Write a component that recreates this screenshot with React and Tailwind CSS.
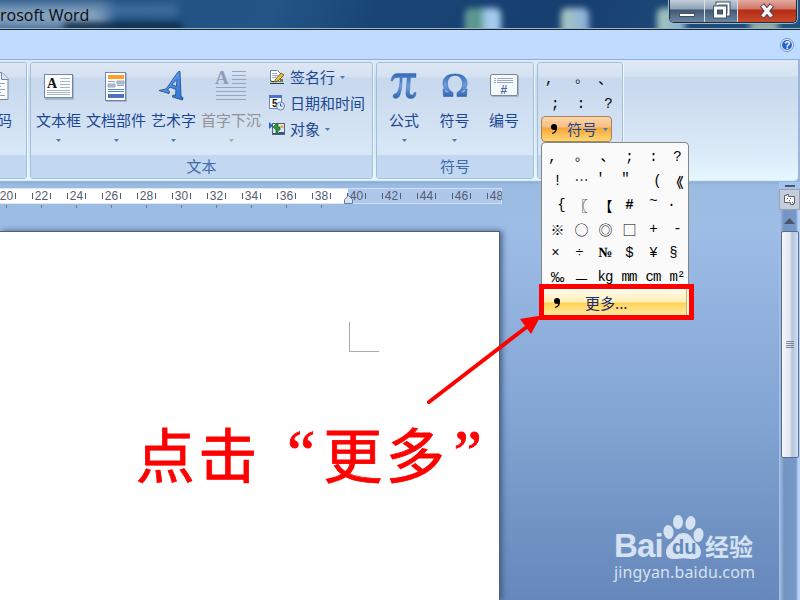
import React from "react";

const rulerNumbers = [20, 22, 24, 26, 28, 30, 32, 34, 36, 38, 40, 42, 44, 46, 48];

// [glyph, extra classes inside its 24px cell]
const symbols = [
  [",", "-translate-x-[5px]"],
  ["◦", "-translate-x-1 translate-y-1 text-[17px]"],
  ["、", "translate-x-0.5"],
  [";", ""],
  [":", ""],
  ["?", ""],
  ["!", ""],
  ["⋯", ""],
  ["′", "-translate-x-[5px] -translate-y-0.5"],
  ["″", "-translate-x-1 -translate-y-0.5"],
  ["(", "translate-x-1"],
  ["《", "-translate-x-px font-['Noto_Sans_CJK_SC'] font-bold"],
  ["{", "translate-x-1"],
  ["〖", "-translate-x-px font-['Noto_Sans_CJK_SC'] font-bold"],
  ["【", "font-['Noto_Sans_CJK_SC']"],
  ["#", "font-bold"],
  ["~", "-translate-y-1"],
  ["·", "-translate-x-1.5"],
  ["※", "font-['Noto_Sans_CJK_SC']"],
  ["○", "font-['Noto_Sans_CJK_SC']"],
  ["◎", "font-['Noto_Sans_CJK_SC']"],
  ["□", "font-['Noto_Sans_CJK_SC']"],
  ["+", ""],
  ["-", ""],
  ["×", "-translate-x-0.5"],
  ["÷", "-translate-x-0.5"],
  ["№", "font-['Liberation_Serif'] font-bold"],
  ["$", ""],
  ["¥", ""],
  ["§", "-translate-x-1"],
  ["‰", "font-['Liberation_Sans']"],
  ["—", "font-['Noto_Sans_CJK_SC']"],
  ["kg", ""],
  ["mm", ""],
  ["cm", ""],
  ["m²", ""],
];

function Caret({ className = "text-[#4a7ab8]" }) {
  return (
    <svg className={className} width="5" height="3" viewBox="0 0 5 3" fill="currentColor">
      <path d="M0 0h5L2.500 3z" />
    </svg>
  );
}

function TextBoxIcon() {
  return (
    <svg width="32" height="32" viewBox="0 0 32 32">
      <rect x="2" y="5" width="29" height="25" rx="1" fill="#7b8fa8" opacity=".5" />
      <rect x="1.500" y="4.500" width="28" height="23" fill="#fbfcfe" stroke="#7087a5" />
      <text x="4" y="18" fontSize="14" fontWeight="bold" fontFamily="Liberation Serif, serif" fill="#111">A</text>
      <path d="M17 8.500h10M17 11.500h10M17 14.500h10M17 17.500h10M4 20.500h23M4 22.500h23M4 24.500h23" stroke="#a5b5cc" />
    </svg>
  );
}

function PartsIcon() {
  return (
    <svg width="32" height="32" viewBox="0 0 32 32">
      <rect x="6" y="3" width="21" height="29" fill="#7b8fa8" opacity=".5" />
      <rect x="5.500" y="2.500" width="20" height="28" fill="#fdfdff" stroke="#6f87a8" />
      <rect x="8" y="5" width="16" height="4" fill="#ff9e22" />
      <path d="M8 11.500h7M17 11h7v3h-7zM8 14h7v3H8zM17 15.500h7" fill="#b0bfd5" stroke="#9aaac4" />
      <path d="M8 19.500h16M8 21.500h16" stroke="#5a7fae" />
      <rect x="8" y="24" width="16" height="4" fill="#4c74c3" />
    </svg>
  );
}

function WordArtIcon() {
  return (
    <svg className="overflow-visible" width="32" height="32" viewBox="0 0 32 32">
      <defs>
        <linearGradient id="art" x1="0" y1="0" x2="1" y2="1">
          <stop offset="0" stopColor="#a5ccfa" />
          <stop offset=".5" stopColor="#4b8fe8" />
          <stop offset="1" stopColor="#2f6ccb" />
        </linearGradient>
      </defs>
      <path d="M1 20.500L8 19C12 14 16 7 20.500 1.500h1.500L23 26.500l2 1-.5 2.500-10-3 .5-2 2.500.5.500-6-6-2.500-2.500 3 2 1.500-.5 2-10-3zM14 14.500l4.500 2L19 9.500z" fill="url(#art)" fillRule="evenodd" stroke="#274f8b" strokeWidth=".9" strokeLinejoin="round" />
    </svg>
  );
}

function DropCapIcon() {
  return (
    <svg className="overflow-visible" width="32" height="32" viewBox="0 0 32 32">
      <text x="0" y="14" fontSize="19" fontWeight="bold" fontFamily="Liberation Serif, serif" fill="#8e9dbb">A</text>
      <path d="M17 1.500h14M17 5.500h14M17 9.500h14M17 13.500h14M1 17.500h30M1 21.500h30M1 25.500h30M1 29.500h30" stroke="#97a5be" />
    </svg>
  );
}

function PiIcon() {
  return (
    <svg width="32" height="32" viewBox="0 0 32 32">
      <defs>
        <linearGradient id="blue" x1="0" y1="0" x2="0" y2="1">
          <stop offset="0" stopColor="#3468b4" />
          <stop offset=".5" stopColor="#6ba0e2" />
          <stop offset="1" stopColor="#3465b0" />
        </linearGradient>
      </defs>
      <path d="M3 11C4 5 6 3.500 10 3.500h18v4h-5.500L21.500 22c0 4 4 4 4.500.5h2c0 4-2 6-5 6-4 0-5.500-2.500-5-7l1.200-14h-5C14 16 13.500 22 11.500 26 10 29 5 29.500 5 26c0-1.500 1.500-2.500 3-2.500C11 21 12 15 12 7.500h-2C7 7.500 5.500 8.500 4.500 11z" fill="url(#blue)" stroke="#2f62ad" strokeWidth=".4" />
    </svg>
  );
}

function OmegaIcon() {
  return (
    <svg width="32" height="32" viewBox="0 0 32 32">
      <path d="M4 19h1.500c.5 3 1.500 3.500 5.500 3.500C6 20 4 17 4 13.500 4 7 9 4 16 4s12 3 12 9.500c0 3.500-2 6.500-7 9 4 0 5-.5 5.500-3.500H28l-.5 7.500H18v-4c4-2 5.500-5 5.500-9C23.500 8.500 20.500 5.500 16 5.500S8.500 8.500 8.500 13.500c0 4 1.500 7 5.500 9v4H4.500z" fill="url(#blue)" stroke="#3467b2" strokeWidth=".6" />
    </svg>
  );
}

function NumberIcon() {
  return (
    <svg width="32" height="32" viewBox="0 0 32 32">
      <rect x="3" y="5" width="28" height="22" rx="2" fill="#7b8fa8" opacity=".5" />
      <rect x="2.500" y="4.500" width="27" height="21" rx="1.500" fill="#f6f8fc" stroke="#7488a5" />
      <path d="M6 8.500h2M6 10.500h2M6 12.500h2M9 8.500h16M9 10.500h16M9 12.500h16" stroke="#9aabc5" />
      <text x="12.500" y="23.500" fontSize="12" fontWeight="bold" fontFamily="Liberation Sans, sans-serif" fill="#4c6b9f">#</text>
    </svg>
  );
}

function SignIcon() {
  return (
    <svg width="16" height="16" viewBox="0 0 16 16">
      <path d="M1.500 1.500h7l3 3v8h-10z" fill="#fff" stroke="#6e829e" />
      <path d="M3 4.500h5M3 6.500h6M3 8.500h4" stroke="#9db0c8" />
      <path d="M6 11l6-7 3 2-6 6-3 1z" fill="#f1bd36" stroke="#5b481d" strokeWidth=".8" />
      <path d="M1 14.500h14M2 12l3 1" stroke="#333" />
      <path d="M11 10h3v3h-3z" fill="#48904a" />
    </svg>
  );
}

function DateIcon() {
  return (
    <svg width="16" height="16" viewBox="0 0 16 16">
      <rect x=".5" y=".5" width="12" height="13" fill="#fff" stroke="#6b88b8" />
      <path d="M0 0h13v3H0z" fill="#4b75c4" />
      <text x="3" y="12" fontSize="10" fontWeight="bold" fontFamily="Liberation Sans, sans-serif" fill="#111">5</text>
      <circle cx="11.500" cy="11" r="4" fill="#dbe8f8" stroke="#5d7fb0" />
      <path d="M11.500 8.500V11h2" stroke="#345a94" fill="none" />
    </svg>
  );
}

function ObjectIcon() {
  return (
    <svg width="16" height="16" viewBox="0 0 16 16">
      <rect x="3.500" y="2.500" width="12" height="11" fill="#dbe9f5" stroke="#51657f" />
      <path d="M0 1l4 3.500L0 8z" fill="#2e62c0" />
      <path d="M7 3h2v3h2v3H9v4H7V9L4 6z" fill="#2f973e" stroke="#1a5c28" strokeWidth=".7" />
      <circle cx="13" cy="5.500" r="1.600" fill="#e8ad28" />
      <path d="M10 11.500h5M4 12.500h11" stroke="#38536f" />
    </svg>
  );
}

function BigButton({ icon, label, width, caret = true, disabled }) {
  return (
    <div className={"flex shrink-0 flex-col items-center pt-[7px] " + width}>
      {icon}
      <span className={"mt-1.5 h-6 text-[15px] leading-6 whitespace-nowrap " + (disabled ? "text-[#929292]" : "text-[#1b4792]")}>
        {label}
      </span>
      {caret && (
        <div className="mt-[7px]">
          <Caret className={disabled ? "text-[#aaa9ad]" : "text-[#4a7ab8]"} />
        </div>
      )}
    </div>
  );
}

function Group({ title, className, children }) {
  return (
    <div className={"flex h-[117px] shrink-0 flex-col overflow-hidden rounded-[3px] border border-[#9fbfdb] shadow-[1px_1px_0_#eef7ff] " + className}>
      <div className="flex h-[92px] shrink-0 bg-[linear-gradient(#dce6f4_0,#d5e1f1_14px,#c8d8ed_15px,#d9e8f6_100%)]">
        {children}
      </div>
      <div className="flex-1 bg-[#c1d8f0] text-center text-[15px] leading-[22px] text-[#3e6aaa]">{title}</div>
    </div>
  );
}

function TitleBar() {
  return (
    <div className="relative flex h-[30px] shrink-0 justify-between overflow-hidden border-b border-[#142739] bg-[linear-gradient(115deg,#1d4d80_0,#245587_34%,#184575_47%,#173f70_70%,#23517f_100%)]">
      <div className="absolute top-1 -left-5 h-6 w-32 bg-[#b7cbdc] opacity-70 blur-[7px]" />
      <div className="absolute top-1 left-[98px] h-3 w-20 bg-[#5e88b4] opacity-50 blur-[4px]" />
      <div className="absolute top-[23px] left-16 h-2 w-[118px] bg-[#112b45] blur-[3px]" />
      <div className="absolute top-2 left-[465px] h-7 w-9 rounded-md bg-[linear-gradient(90deg,#6fa39e,#4f9083_35%,#a5cbee_60%)] blur-[3px]" />
      <div className="absolute top-2 left-[561px] h-7 w-7 rounded-md bg-[linear-gradient(90deg,#adc8bf,#86b0dc)] blur-[3px]" />
      <div className="absolute top-2 left-[657px] h-7 w-7 rounded-md bg-[linear-gradient(90deg,#a4c5b8,#86b0dc)] blur-[3px]" />
      <div className="absolute top-5 left-[750px] h-5 w-7 bg-[#c9d6ba] opacity-70 blur-[3px]" />
      <div className="absolute bottom-0 h-px w-full bg-[#9db6bd]" />
      <span className="relative pt-1 font-['Open_Sans','Noto_Sans',sans-serif] text-[16px] leading-[23px] text-[#080c10]">
        rosoft Word
      </span>
      <div className="relative mr-[3px] flex h-[23px] w-[128px] overflow-hidden rounded-b-[5px] border border-t-0 border-[#1a2c40] shadow-[0_0_0_1px_#9fb5c9]">
        <div className="flex w-[35px] justify-center border-r border-[#d5dfe8] bg-[linear-gradient(#c1cedb_0,#8fa1b5_9px,#405872_10px,#6c86a3)]">
          <div className="mt-[13px] h-1 w-4 border border-[#425265] bg-white" />
        </div>
        <div className="flex w-[33px] justify-center border-r border-[#d5dfe8] bg-[linear-gradient(#c1cedb_0,#8fa1b5_9px,#405872_10px,#6c86a3)]">
          <svg className="mt-px" width="20" height="19" viewBox="0 0 20 19" fill="none">
            <path d="M6.500 4V2.500h11v11H15" stroke="#425265" strokeWidth="4" />
            <path d="M6.500 4V2.500h11v11H15" stroke="#fff" strokeWidth="2" />
            <path d="M4.500 7h9v8h-9z" stroke="#425265" strokeWidth="5" />
            <path d="M4.500 7h9v8h-9z" stroke="#fff" strokeWidth="3" />
          </svg>
        </div>
        <div className="flex flex-1 justify-center bg-[linear-gradient(#e3aaa0_0,#cf7666_9px,#b42b14_10px,#c94a2b)]">
          <svg className="mt-[3px]" width="18" height="16" viewBox="0 0 18 16">
            <path d="M4 2l10 12M14 2L4 14" stroke="#5b3d47" strokeWidth="5.500" />
            <path d="M4.500 2.500l9 11M13.500 2.500l-9 11" stroke="#f4f6f8" strokeWidth="3.500" />
          </svg>
        </div>
      </div>
    </div>
  );
}

function Ribbon() {
  return (
    <div className="relative h-[122px] shrink-0 bg-[#9bb6d9] pr-0.5">
      <div className="flex h-[120px] overflow-hidden rounded-br bg-[linear-gradient(#e0e9f5_0,#d5e2f1_16px,#c8d8ed_17px,#d9e9f7_90px,#e6f7ff_100%)] pt-0.5 shadow-[0_1px_0_#c5f0fa]">
        <Group title="" className="-ml-1 w-[31px]">
          <div className="flex flex-col pt-2">
            <svg className="-ml-4" width="30" height="32" viewBox="0 0 30 32">
              <path d="M3 1.500h18l6 6v21H3z" fill="#fbfcff" stroke="#6f87a8" />
              <path d="M20.500 1.500v7h7" fill="#dce5f1" stroke="#6f87a8" />
              <path d="M10 12.500h14M10 15.500h10M10 18.500h14M10 21.500h10M10 24.500h14" stroke="#91a5c1" />
            </svg>
            <span className="mt-[5px] text-[15px] leading-6 text-[#1b4792]">码</span>
          </div>
        </Group>

        <Group title="文本" className="ml-[3px] w-[343px]">
          <BigButton icon={<TextBoxIcon />} label="文本框" width="w-[55px]" />
          <BigButton icon={<PartsIcon />} label="文档部件" width="w-[60px]" />
          <BigButton icon={<WordArtIcon />} label="艺术字" width="w-[55px]" />
          <BigButton icon={<DropCapIcon />} label="首字下沉" width="w-[60px]" disabled />
          <div className="flex flex-col pt-px pl-2 text-[15px] text-[#1b4792]">
            <div className="flex h-[26px] items-center gap-[5px]">
              <SignIcon /> 签名行 <span><Caret /></span>
            </div>
            <div className="flex h-[26px] items-center gap-[5px] whitespace-nowrap">
              <DateIcon /> 日期和时间
            </div>
            <div className="flex h-[26px] items-center gap-[5px]">
              <ObjectIcon /> 对象 <span><Caret /></span>
            </div>
          </div>
        </Group>

        <Group title="符号" className="ml-[3px] w-[158px]">
          <BigButton icon={<PiIcon />} label="公式" width="w-[54px]" />
          <BigButton icon={<OmegaIcon />} label="符号" width="w-[47px]" />
          <BigButton icon={<NumberIcon />} label="编号" width="w-[52px]" caret={false} />
        </Group>

        <Group title="" className="ml-[3px] w-[86px]">
          <div className="flex w-[74px] flex-col pt-[7px] pl-[3px]">
            <div className="grid h-[46px] grid-cols-3 font-['Liberation_Mono','Noto_Sans_CJK_SC',monospace] text-[14px] leading-[22px] text-black">
              <span className="-translate-y-0.5 pl-1">,</span>
              <span className="translate-y-0.5 pl-2 text-[17px]">◦</span>
              <span className="-translate-y-px pl-2.5">、</span>
              <span className="pl-2.5">;</span>
              <span className="pl-3">:</span>
              <span className="pl-4">?</span>
            </div>
            <div className="flex h-[26px] w-[71px] shrink-0 items-center rounded-sm border border-[#a88550] bg-[linear-gradient(#fbd6ac_0,#f8be82_10px,#f6a53d_11px,#fdd873_100%)] text-[15px] text-[#1b4792]">
              <CommaMark className="ml-2" />
              <span className="ml-[9px]">符号</span>
              <span className="ml-1.5"><Caret /></span>
            </div>
          </div>
        </Group>
      </div>
    </div>
  );
}

function CommaMark({ className }) {
  return (
    <svg className={className} width="8" height="12" viewBox="0 0 8 12">
      <circle cx="4" cy="4" r="3" fill="#000" />
      <path d="M6.500 4C6.500 8 5 10 2 10.500" fill="none" stroke="#000" strokeWidth="1.200" />
    </svg>
  );
}

function Ruler() {
  return (
    <div className="h-[50px] w-[779px] shrink-0 bg-[linear-gradient(#8eabd3_0,#9bbbe3_3px,#9dbde5_100%)] pt-1.5">
      <div className="relative flex h-5 w-[502px] overflow-hidden font-['Liberation_Sans',sans-serif] text-[12px] text-[#555c70]">
        <div className="h-4 w-[348px] shrink-0 border-y border-[#dfe7f2] bg-white" />
        <div className="h-4 flex-1 border border-l-0 border-[#cfe0f6] bg-[#aec8eb]" />
        <div className="absolute top-0 -left-[11px] flex">
          {rulerNumbers.map((n) => (
            <div key={n} className="flex w-[35px] shrink-0 flex-col items-center">
              <div className="flex h-4 items-center gap-[1px]">
                <i className="h-1.5 w-px bg-[#555c70]" />
                <span className="w-[15px] text-center">{n}</span>
                <i className="h-1.5 w-px bg-[#555c70]" />
              </div>
              {n < 40 && <i className="mt-px h-[3px] w-px bg-[#71808f]" />}
            </div>
          ))}
        </div>
        <svg className="absolute top-[7px] left-[344px]" width="9" height="9" viewBox="0 0 9 9">
          <path d="M.5 8.500v-4l4-4 4 4v4z" fill="#d7e2ef" stroke="#647c9d" />
        </svg>
      </div>
    </div>
  );
}

function ScrollBar() {
  return (
    <div className="flex w-[21px] flex-col items-center bg-[linear-gradient(90deg,#a9c5ea_0,#7494c1_5px,#7799c7_17px,#b6d1f4_19px)]">
      <div className="flex h-[7px] w-full shrink-0 items-center justify-center bg-[#a6c5ee]">
        <div className="h-0.5 w-2.5 bg-[#4a5570]" />
      </div>
      <div className="flex h-[21px] w-full shrink-0 items-center justify-center border border-[#97a1b5] bg-[#c5cddb]">
        <svg width="13" height="13" viewBox="0 0 13 13" fill="#f6f7f5" stroke="#5a6274">
          <path d="M1.500 2.500h2v-1h2v2h6v7h-1v1h-3v-2h-6z" />
          <path d="M4 5.500h1M7 5.500h1M6 7.500h1M9 9.500h1" />
        </svg>
      </div>
      <div className="flex h-[21px] shrink-0 items-center">
        <svg width="11" height="6" viewBox="0 0 11 6">
          <path d="M5.500 0L11 6H0z" fill="#48546f" />
        </svg>
      </div>
      <div className="ml-px flex h-[227px] w-[18px] shrink-0 flex-col items-center justify-center gap-px rounded-[2px] border border-[#566a9d] bg-[linear-gradient(90deg,#f5f6f9_0,#e1e7ee_8px,#b4c5dc_10px,#c8d8e9_15px,#edf3f9)]">
        <i className="h-px w-2 bg-[#7b8799]" />
        <i className="h-px w-2 bg-[#7b8799]" />
        <i className="h-px w-2 bg-[#7b8799]" />
        <i className="h-px w-2 bg-[#7b8799]" />
      </div>
    </div>
  );
}

function SymbolMenu() {
  return (
    <div className="absolute top-[142px] left-[539px] w-[155px]">
      <div className="ml-0.5 grid h-[146px] w-[148px] grid-cols-[repeat(6,24px)] grid-rows-[repeat(6,24px)] overflow-hidden rounded-t-sm border border-[#868686] bg-[#fafafa] pt-0.5 pl-[3px] font-['Liberation_Mono','Noto_Sans_CJK_SC',monospace] text-[14px] leading-6 tracking-[-1px] text-black">
        {symbols.map(([glyph, extra], i) => (
          <span key={i} className={"text-center " + extra}>
            {glyph}
          </span>
        ))}
      </div>
      <div className="relative -mt-1 flex h-9 items-center border-[5px] border-[#fe0000] bg-[linear-gradient(#fffdf0_0,#ffeeb5_13px,#ffd257_14px,#ffeba0_100%)] pt-0.5 text-[15px] text-[#1a2a70]">
        <CommaMark className="ml-[9px]" />
        <span className="ml-6 leading-6">更多...</span>
        <div className="absolute top-0 right-0 h-full w-[3px] border-l border-[#ccb56a] bg-[#fffad8]" />
      </div>
    </div>
  );
}

function Watermark() {
  return (
    <div className="absolute top-[514px] left-[614px] flex flex-col text-[#d5e2f2]">
      <div className="flex h-[47px] items-end">
        <span className="w-[49px] font-['Liberation_Sans',sans-serif] text-[33px] leading-[31px] font-bold tracking-[-0.8px]">Bai</span>
        <svg width="42" height="48" viewBox="0 0 42 48" fill="currentColor">
          <ellipse cx="5.500" cy="19" rx="5" ry="7" transform="rotate(-8 5.500 19)" />
          <ellipse cx="15" cy="9" rx="5" ry="7" />
          <ellipse cx="27.500" cy="10" rx="5" ry="7" transform="rotate(12 27.500 10)" />
          <ellipse cx="35.500" cy="22" rx="5" ry="7" transform="rotate(8 35.500 22)" />
          <path d="M20.500 20c5 0 7 3 9 6 3 4 8.500 7 8.500 13 0 5-3.500 7-8 7-3 0-6-.8-9.500-.8S14 46 11 46c-5 0-8-2.500-8-7 0-6 5.500-9 8.500-13 2-3 4-6 9-6z" />
          <text x="9" y="41" fontSize="20" fontWeight="bold" fontFamily="Liberation Sans, sans-serif" fill="#6289bc">du</text>
        </svg>
        <span className="text-[24px] leading-[30px] font-bold">经验</span>
      </div>
      <span className="mt-px font-['Noto_Sans',sans-serif] text-[16px] leading-5 tracking-[0.15px]">jingyan.baidu.com</span>
    </div>
  );
}

export default function App() {
  return (
    <div lang="zh-CN" className="relative flex h-[600px] w-[800px] flex-col overflow-hidden bg-[#9dbde5] font-['Noto_Sans_CJK_SC',sans-serif]">
      <TitleBar />
      <div className="flex h-[30px] shrink-0 items-center justify-end border-b border-[#8db0e3] bg-[#bfdbff] pr-1.5">
        <svg width="14" height="14" viewBox="0 0 14 14">
          <circle cx="7" cy="7" r="6.500" fill="#e6f1fd" stroke="#6c93cf" />
          <circle cx="7" cy="7" r="5" fill="#2464cf" />
          <text x="4.200" y="10.500" fontSize="10" fontWeight="bold" fontFamily="Liberation Sans, sans-serif" fill="#fff">?</text>
        </svg>
      </div>
      <Ribbon />
      <div className="flex min-h-0 flex-1">
        <div className="flex w-[779px] flex-col">
          <Ruler />
          <div className="-mt-px flex min-h-0 flex-1 bg-[linear-gradient(#9dbde7_0,#83a5d3_50%,#6587ba_100%)]">
            <div className="h-full w-[500px] border-t border-r border-[#555f70] bg-white shadow-[2px_0_6px_#3f5b84]">
              <div className="mt-[90px] ml-[349px] h-[30px] w-[30px] border-b border-l border-[#aaa]" />
              <div className="mt-[57px] ml-[134px] flex h-[88px] text-[59px] leading-[88px] text-[#fe0000] [-webkit-text-stroke:0.8px_#fe0000]">
                <span className="w-[62.5px] shrink-0 text-center">点</span>
                <span className="w-[62.5px] shrink-0 text-center">击</span>
                <span className="w-[62.5px] shrink-0 pr-1.5 text-right font-['Liberation_Serif',serif] text-[64px]">“</span>
                <span className="w-[62.5px] shrink-0 text-center">更</span>
                <span className="w-[62.5px] shrink-0 text-center">多</span>
                <span className="w-[50px] shrink-0 pl-[7px] font-['Liberation_Serif',serif] text-[64px]">”</span>
              </div>
            </div>
          </div>
        </div>
        <ScrollBar />
      </div>

      <SymbolMenu />
      <svg className="absolute top-[310px] left-[420px]" width="130" height="100" viewBox="420 310 130 100">
        <path d="M429 402L528 326" stroke="#fe0000" strokeWidth="4" strokeLinecap="round" />
        <path d="M541 315.500L520 319l11 15z" fill="#fe0000" />
      </svg>
      <Watermark />
    </div>
  );
}
